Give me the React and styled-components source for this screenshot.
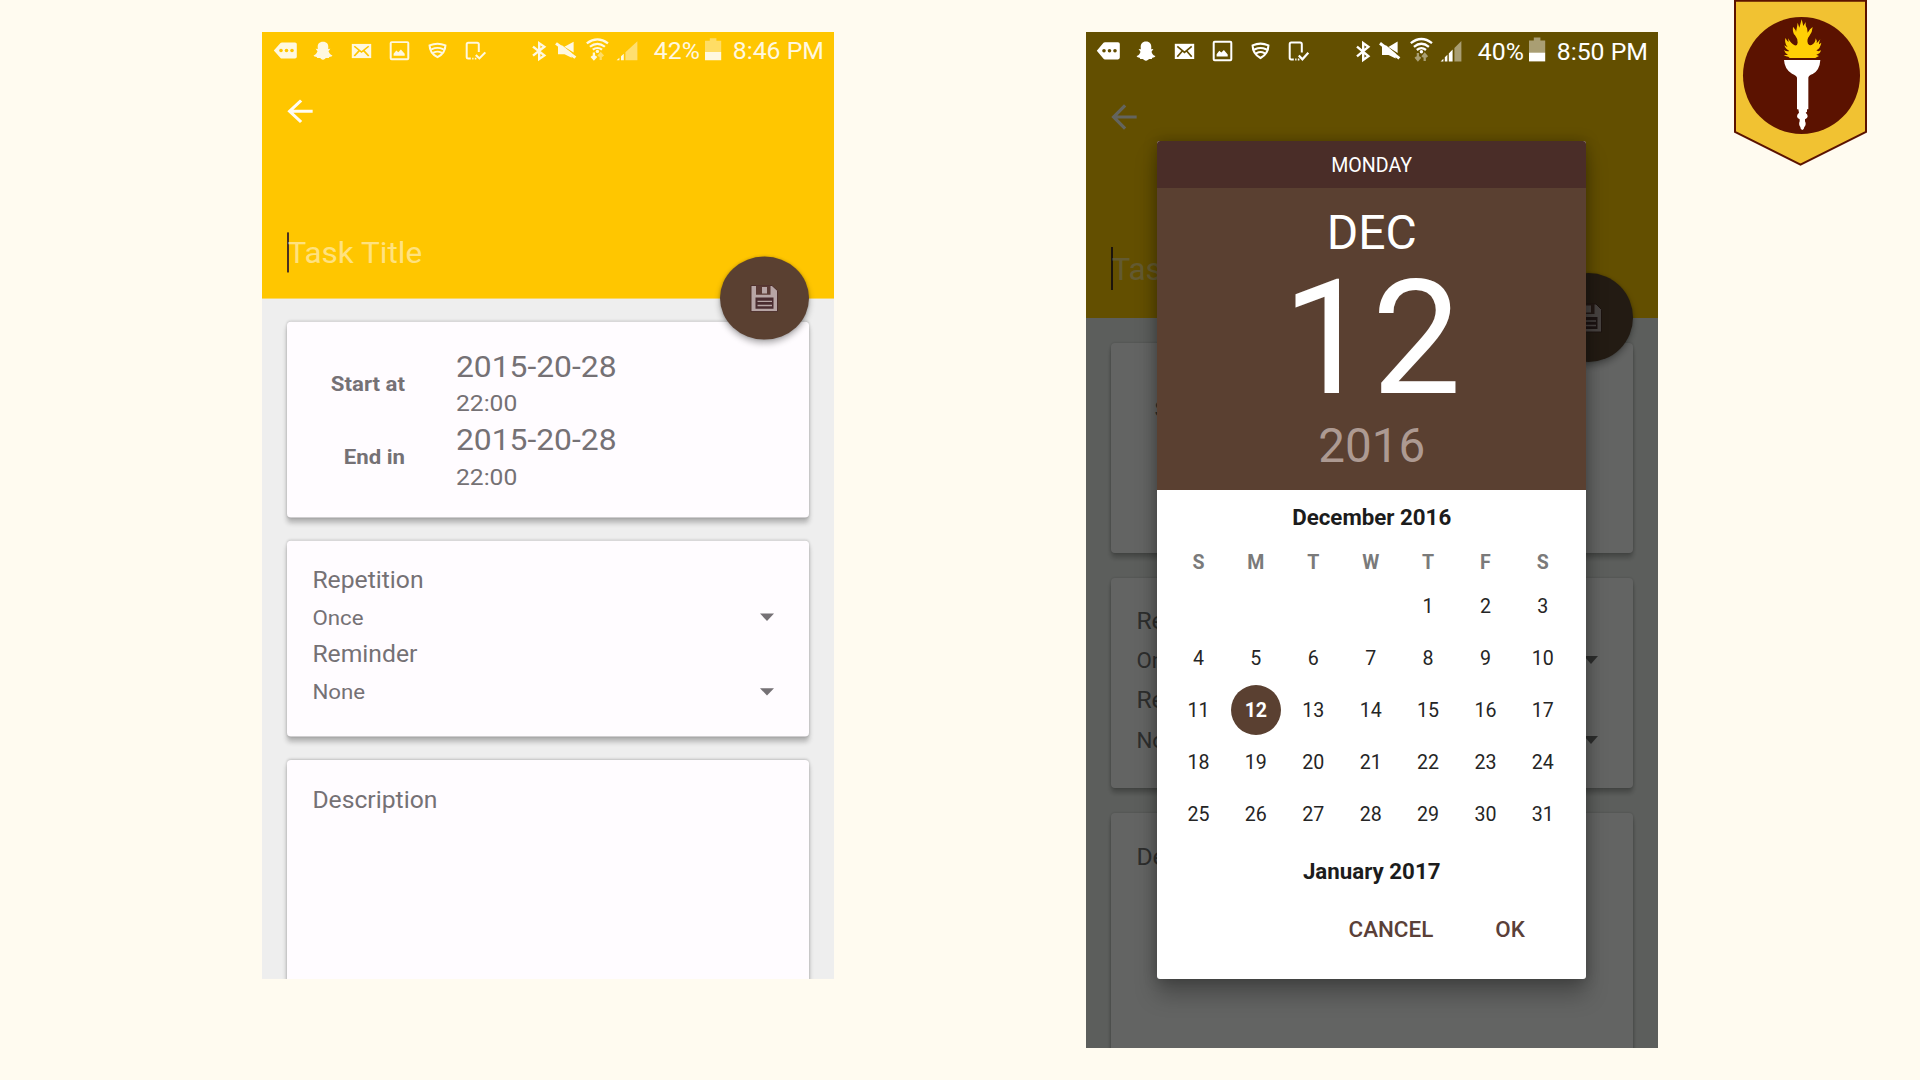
import React from "react";
import styled, { createGlobalStyle } from "styled-components";

const GlobalStyle = createGlobalStyle`
  *, *::before, *::after { box-sizing: border-box; }
  body { margin: 0; background: #fffbf0; }
`;

const Page = styled.main`
  display: flex;
  align-items: flex-start;
  width: 1920px;
  height: 1080px;
  padding-left: 262px;
  overflow: hidden;
  background: #fffbf0;
  font-family: Roboto, "Liberation Sans", sans-serif;
`;

const Phone = styled.section`
  flex: none;
  width: 572px;
  height: ${(p) => p.$height}px;
  margin: 32px ${(p) => p.$gap}px 0 0;
  overflow: hidden;
`;

const Screen = styled.div`
  position: relative;
  display: flex;
  flex-direction: column;
  width: 572px;
  height: 1016px;
  overflow: hidden;
  background: #eeeeee;
  transform: scaleY(${(p) => p.$squash});
  transform-origin: top;
`;

const StatusBar = styled.div`
  position: absolute;
  z-index: 3;
  top: ${(p) => p.$top}px;
  left: 0;
  right: 0;
  display: flex;
  height: 40px;
  padding: 0 10px 0 ${(p) => p.$start}px;
  color: ${(p) => p.$color};
`;

const StatusGroup = styled.div`
  display: flex;
  margin-left: ${(p) => p.$offset || 0}px;
`;

const Glyph = styled.svg`
  display: block;
  flex: none;
`;

const StatusText = styled.span`
  width: ${(p) => p.$width}px;
  font-size: 24.8px;
  line-height: 42.6px;
  text-align: right;
  white-space: nowrap;
`;

const Header = styled.header`
  flex: none;
  height: 286px;
  padding-top: 40px;
  background: #ffc600;
`;

const Toolbar = styled.div`
  display: flex;
  align-items: center;
  height: 89px;
  padding-left: 19px;
`;

const TitleField = styled.div`
  display: flex;
  height: 43px;
  margin: 86px 0 0 25.4px;
`;

const Cursor = styled.span`
  width: 2px;
  height: 43px;
  background: #4a3020;
`;

const Placeholder = styled.span`
  margin-left: -2px;
  font-size: 31.5px;
  line-height: 46.8px;
  color: rgba(255, 255, 255, 0.5);
`;

const Fab = styled.div`
  position: absolute;
  z-index: 1;
  top: 241px;
  left: 457.5px;
  display: grid;
  place-items: center;
  width: 89px;
  height: 89px;
  padding: 0 1px 0 0;
  border-radius: 50%;
  background: #5a4031;
  box-shadow: 0 4px 7px rgba(0, 0, 0, 0.3), 0 0 3px rgba(0, 0, 0, 0.2);
`;

const Cards = styled.div`
  display: flex;
  flex-direction: column;
  gap: 25px;
  padding: 25px 25px 0 25.4px;
`;

const Card = styled.section`
  flex: none;
  height: ${(p) => p.$height || 210}px;
  padding: ${(p) => p.$top}px 34.6px 0 25px;
  border-radius: 4px;
  background: #fffcff;
  color: #757175;
  box-shadow: 0 5px 5px rgba(0, 0, 0, 0.24), 0 0 3px rgba(0, 0, 0, 0.2);
`;

const DateRow = styled.div`
  display: grid;
  grid-template-columns: 92.6px 1fr;
  column-gap: 51px;
  height: 79.4px;
`;

const DateLabel = styled.span`
  font-size: 22.2px;
  font-weight: 700;
  line-height: 75.4px;
  text-align: right;
  white-space: nowrap;
`;

const DateText = styled.div`
  font-size: 31.8px;
  line-height: 39.6px;
`;

const TimeText = styled.div`
  font-size: 24.6px;
  line-height: 38.4px;
`;

const FieldLabel = styled.div`
  font-size: 24.7px;
  line-height: ${(p) => p.$line || 32}px;
`;

const Select = styled.div`
  display: flex;
  align-items: center;
  justify-content: space-between;
  height: 47.3px;
  font-size: 22.3px;
`;

const Caret = styled.span`
  border: 7.5px solid transparent;
  border-top: 8px solid #757175;
  border-bottom: 0;
`;

const Scrim = styled.div`
  position: absolute;
  z-index: 2;
  inset: 0;
  display: flex;
  align-items: flex-start;
  justify-content: center;
  padding: 108.6px 0.6px 0 0;
  background: rgba(0, 4, 0, 0.61);
`;

const Dialog = styled.div`
  display: flex;
  flex-direction: column;
  width: 429px;
  height: 838px;
  overflow: hidden;
  border-radius: 3px;
  background: #fff;
  box-shadow: 0 16px 22px rgba(0, 0, 0, 0.26), 0 0 14px rgba(0, 0, 0, 0.25);
  text-align: center;
`;

const Weekday = styled.div`
  flex: none;
  height: 47.6px;
  background: #4a2d28;
  color: #fff;
  font-size: 19.6px;
  line-height: 50.4px;
`;

const DatePanel = styled.div`
  flex: none;
  height: 301.6px;
  background: #5a4031;
  color: #fff;
`;

const PanelLine = styled.div`
  font-size: ${(p) => p.$size}px;
  line-height: ${(p) => p.$line}px;
  color: ${(p) => p.$color || "#fff"};
`;

const MonthName = styled.div`
  flex: none;
  font-size: 22.3px;
  font-weight: 700;
  line-height: ${(p) => p.$line}px;
  color: #1c1c1c;
`;

const Week = styled.div`
  display: grid;
  grid-template-columns: repeat(7, 57.4px);
  align-items: center;
  flex: none;
  height: ${(p) => p.$height}px;
  padding-left: 12.6px;
`;

const WeekLetter = styled.span`
  font-size: 19.5px;
  font-weight: 700;
  color: #7a7a7a;
`;

const Day = styled.span`
  justify-self: center;
  width: 50.7px;
  height: 50.7px;
  border-radius: 50%;
  font-size: 19.6px;
  line-height: 51px;
  font-weight: ${(p) => (p.$selected ? 700 : 400)};
  color: ${(p) => (p.$selected ? "#fff" : "#252525")};
  background: ${(p) => (p.$selected ? "#5a4031" : "transparent")};
`;

const Actions = styled.div`
  display: flex;
  justify-content: flex-end;
  gap: 62px;
  padding-right: 61.4px;
`;

const Action = styled.span`
  font-size: 22.4px;
  font-weight: 500;
  line-height: 54px;
  color: #5a4038;
`;

function NotificationIcons({ bg }) {
  return (
    <StatusGroup>
      <Glyph width="38" height="40" fill="currentColor">
        <path d="M7.8 19.8 14.5 11.8Q15 11.2 16 11.2H29Q30.8 11.2 30.8 13V26.6Q30.8 28.4 29 28.4H16Q15 28.4 14.5 27.8Z" />
        <g fill={bg}>
          <circle cx="15" cy="19.8" r="1.8" />
          <circle cx="20.5" cy="19.8" r="1.8" />
          <circle cx="26" cy="19.8" r="1.8" />
        </g>
      </Glyph>
      <Glyph width="38" height="40" fill="currentColor">
        <path d="M19 10.4C22.8 10.4 24.4 13 24.3 16.1L24.2 18.2 26.4 18 24.5 20.7C25.1 22.8 26.3 24.2 28.4 25.1 28 26.4 26.8 26.4 25.3 26.7L24.8 28H22.3C21 28.3 20.6 29.7 19 29.7S17 28.3 15.7 28H13.2L12.7 26.7C11.2 26.4 10 26.4 9.6 25.1 11.7 24.2 12.9 22.8 13.5 20.7L11.6 18 13.8 18.2 13.7 16.1C13.6 13 15.2 10.4 19 10.4Z" />
      </Glyph>
      <Glyph width="38" height="40">
        <rect x="9.8" y="12.8" width="19.4" height="15.2" fill="currentColor" />
        <path d="M12.3 15.3 19.5 21.5 26.7 15.3M12.3 25.8 17.3 20M26.7 25.8 21.7 20" fill="none" stroke={bg} strokeWidth="1.7" />
      </Glyph>
      <Glyph width="38" height="40">
        <rect x="10.7" y="10.8" width="17.6" height="18.4" rx="1" fill="none" stroke="currentColor" strokeWidth="2" />
        <path d="M13.6 25.4V23.3L16.3 19.8 18.3 21.6 20.9 18.9 24.7 23.4V25.4Z" fill="currentColor" />
      </Glyph>
      <Glyph width="38" height="40" fill="none" stroke="currentColor" strokeWidth="2.1" strokeLinecap="round">
        <path d="M11.6 14.4Q19.5 10.8 27.4 14.4Q27.2 22.8 19.5 27Q11.8 22.8 11.6 14.4Z" />
        <path d="M14 18.3Q19.5 15.8 25 18.3M15.6 22.1Q19.5 20 23.4 22.1" />
      </Glyph>
      <Glyph width="38" height="40" fill="none" stroke="currentColor" strokeWidth="2">
        <path d="M22.8 21.5V13.2Q22.8 11.5 21.2 11.5H12.2Q10.7 11.5 10.7 13.2V26.7Q10.7 28.4 12.2 28.4H14.8M16.2 28.6H17.5M18.8 28.6H20.4" />
        <path d="M19.8 24.6 23.4 28.3 29.3 21.8" strokeWidth="2.2" />
      </Glyph>
    </StatusGroup>
  );
}

function SystemIcons({ bars, offset }) {
  return (
    <StatusGroup $offset={offset}>
      <Glyph width="28" height="40" fill="none" stroke="currentColor" strokeWidth="2.4">
        <path d="M8 15.6 19.4 25.2 14.2 29V12L19.4 15.8 8 25.4" />
      </Glyph>
      <Glyph width="28" height="40" fill="currentColor">
        <path d="M20.6 10.4V22L11.4 15.9Z" />
        <path d="M5 14.6H9.3L18.7 22.6V27.6L11.5 23.9H5Z" />
        <path d="M3 12.2 22.4 27.4" stroke="currentColor" strokeWidth="3" />
      </Glyph>
      <Glyph width="32" height="40" fill="none" stroke="currentColor" strokeWidth="2.3">
        <path d="M5.8 12.2Q16.4 3.8 27 12.2M8.9 15.8Q16.4 9.8 23.9 15.8M11.8 19Q16.4 15.3 21 19" />
        <circle cx="16.4" cy="20.8" r="1.7" fill="currentColor" stroke="none" />
        <path d="M12.9 22V28M10.4 26 12.9 29 15.4 26" opacity={bars === 2 ? 1 : 0.45} />
        <path d="M19.7 30V24M17.2 26 19.7 23 22.2 26" opacity="0.45" />
      </Glyph>
      {bars === 2 ? (
        <Glyph width="28" height="40" fill="currentColor">
          <path d="M12.4 30.4V21.8L24.4 10V30.4Z" opacity="0.5" />
          <path d="M3.6 30.4 6.4 27.7V30.4ZM8 30.4V26.1L10.8 23.4V30.4Z" />
        </Glyph>
      ) : (
        <Glyph width="28" height="40" fill="currentColor">
          <path d="M17.4 30.4V16.9L24.4 10V30.4Z" opacity="0.45" />
          <path d="M3.6 30.4 6.4 27.7V30.4ZM7.8 30.4V26.3L10.4 23.8V30.4ZM11.800 30.4V22.4L15.6 18.6V30.4Z" />
        </Glyph>
      )}
    </StatusGroup>
  );
}

function Battery() {
  return (
    <Glyph width="20" height="40" fill="currentColor">
      <path d="M2 9.5H6.8V6.6H13.4V9.5H18.2V21.5H2Z" opacity="0.45" />
      <path d="M2 21.5H18.2V30.4H2Z" />
    </Glyph>
  );
}

function SaveIcon() {
  return (
    <Glyph width="30" height="30" viewBox="0 0 30 30">
      <path d="M2 1H23L28.5 6.5V29H2Z" fill="#b7a5a5" stroke="#4a2c28" strokeWidth="1" />
      <path d="M7 1H21.500V11H7Z" fill="#5a3a35" />
      <path d="M13 2.5H18V9.5H13Z" fill="#b7a5a5" />
      <path d="M6.500 14H24.5V26H6.500Z" fill="#4a2c30" />
      <path d="M8.5 18H23M8.5 22.4H23" stroke="#b7a5a5" strokeWidth="1.5" />
    </Glyph>
  );
}

function TaskScreen({ squash, battery, time, statusTop, statusStart, statusColor, statusBg, bars, children }) {
  return (
    <Screen $squash={squash}>
      <StatusBar $color={statusColor} $top={statusTop} $start={statusStart}>
        <NotificationIcons bg={statusBg} />
        <SystemIcons bars={bars} offset={35 - statusStart} />
        <StatusText $width={59.2}>{battery}</StatusText>
        <StatusGroup $offset={3}>
          <Battery />
        </StatusGroup>
        <StatusText $width={101.6}>{time}</StatusText>
      </StatusBar>
      <Header>
        <Toolbar>
          <Glyph width="38" height="38" viewBox="0 0 24 24" fill="#fff" opacity="0.95">
            <path d="M20 11H7.83l5.59-5.59L12 4l-8 8 8 8 1.41-1.41L7.83 13H20v-2z" />
          </Glyph>
        </Toolbar>
        <TitleField>
          <Cursor />
          <Placeholder>Task Title</Placeholder>
        </TitleField>
      </Header>
      <Fab>
        <SaveIcon />
      </Fab>
      <Cards>
        <Card $top={29}>
          {["Start at", "End in"].map((label) => (
            <DateRow key={label}>
              <DateLabel>{label}</DateLabel>
              <div>
                <DateText>2015-20-28</DateText>
                <TimeText>22:00</TimeText>
              </div>
            </DateRow>
          ))}
        </Card>
        <Card $top={26.6}>
          {[["Repetition", "Once"], ["Reminder", "None"]].map(([label, value]) => (
            <div key={label}>
              <FieldLabel>{label}</FieldLabel>
              <Select>
                <span>{value}</span>
                <Caret />
              </Select>
            </div>
          ))}
        </Card>
        <Card $top={26.4} $height={300}>
          <FieldLabel $line={36.4}>Description</FieldLabel>
        </Card>
      </Cards>
      {children}
    </Screen>
  );
}

const WEEKS = [0, 1, 2, 3, 4].map((w) =>
  [0, 1, 2, 3, 4, 5, 6].map((d) => w * 7 + d - 3)
);

function DatePicker() {
  return (
    <Scrim>
      <Dialog>
        <Weekday>MONDAY</Weekday>
        <DatePanel>
          <PanelLine $size={48} $line={90.6}>DEC</PanelLine>
          <PanelLine $size={159.4} $line={119}>12</PanelLine>
          <PanelLine $size={47.6} $line={96.4} $color="#ad9a92">2016</PanelLine>
        </DatePanel>
        <MonthName $line={55.4}>December 2016</MonthName>
        <Week $height={35.2}>
          {["S", "M", "T", "W", "T", "F", "S"].map((l, i) => (
            <WeekLetter key={i}>{l}</WeekLetter>
          ))}
        </Week>
        {WEEKS.map((week) => (
          <Week key={week[0]} $height={51.9}>
            {week.map((d) => (
              <Day key={d} $selected={d === 12}>{d > 0 ? d : ""}</Day>
            ))}
          </Week>
        ))}
        <MonthName $line={62}>January 2017</MonthName>
        <Actions>
          <Action>CANCEL</Action>
          <Action>OK</Action>
        </Actions>
      </Dialog>
    </Scrim>
  );
}

function TorchBadge() {
  return (
    <Glyph width="135" height="167" viewBox="0 0 405 501">
      <g transform="translate(-39 0)">
        <path d="M45 2H438V396L241.500 494 45 396Z" fill="#f1c232" stroke="#5b1200" strokeWidth="6" />
        <circle cx="244.500" cy="226.500" r="175.500" fill="#5b1200" />
        <path
          d="M209 174 205 170Q198 170 191 165L204 165Q195 160 192 150Q200 156 208 153Q196 147 193 136L203 142Q193 130 196 114Q202 124 206 126L204 115Q214 132 224 136Q232 138 233 128Q234 117 225 106Q217 98 219 80L227 91 228 96 231 81 233 68 238 83 245 58 250 78 257 66Q256 80 261 84L263 98 270 88 278 81Q277 97 268 108Q259 119 264 131Q270 140 278 133Q286 128 287 115Q292 122 290 130L301 118Q296 130 297 133L304 128Q301 145 289 151Q294 156 303 151Q300 162 289 164L297 168Q288 173 286 174Z"
          fill="#ffcf05"
        />
        <path
          d="M192 180H301Q299 211 278 222Q265 227 265 233V328H261V335L257 338Q263 343 263 349Q263 355 255 358V364Q260 374 253 381Q252 388 247 390Q241 388 241 381Q235 374 239 364V358Q231 355 231 349Q231 343 237 338L235 328H231V233Q230 227 216 221Q194 209 192 180Z"
          fill="#fff"
        />
      </g>
    </Glyph>
  );
}

export default function App() {
  return (
    <>
      <GlobalStyle />
      <Page>
        <Phone $height={947} $gap={252}>
          <TaskScreen
            squash={0.932}
            battery="42%"
            time="8:46 PM"
            statusTop={0}
            statusStart={4}
            statusColor="#fff8e0"
            statusBg="#ffc600"
            bars={2}
          />
        </Phone>
        <Phone $height={1016} $gap={75}>
          <TaskScreen
            squash={1}
            battery="40%"
            time="8:50 PM"
            statusTop={-1}
            statusStart={3.2}
            statusColor="#ffffff"
            statusBg="#634d00"
            bars={3}
          >
            <DatePicker />
          </TaskScreen>
        </Phone>
        <TorchBadge />
      </Page>
    </>
  );
}
